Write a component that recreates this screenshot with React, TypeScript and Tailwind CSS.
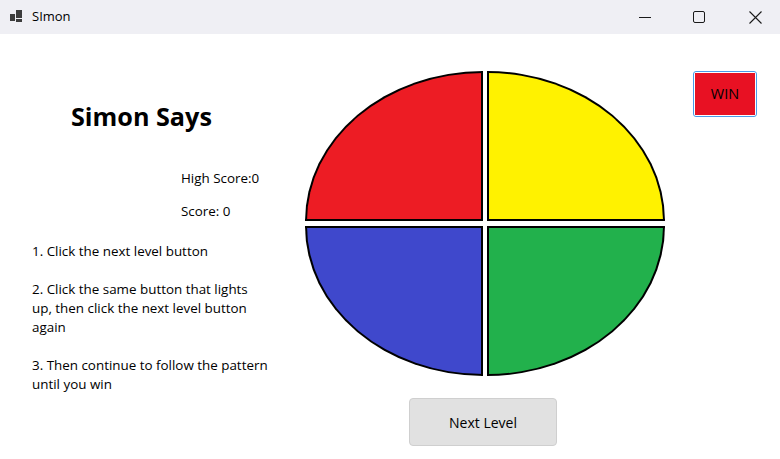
import React from "react";

const font = { fontFamily: '"Open Sans", "Noto Sans", sans-serif' };

function TitleBar() {
  return (
    <div className="flex h-[34px] items-center bg-[#efeff4] text-black">
      {/* default form icon */}
      <svg width="16" height="16" viewBox="0 0 16 16" className="ml-[9px]">
        <rect x="7" y="1" width="6" height="8" fill="#3c3c3c" />
        <rect x="1" y="5" width="5" height="7" fill="#3c3c3c" />
        <rect x="7" y="10" width="6" height="3" fill="#3c3c3c" />
      </svg>
      <span className="ml-[7px] text-[13px]">SImon</span>
      <div className="ml-auto mr-[2px] flex h-full items-center">
        <button className="flex h-full w-[46px] items-center justify-center">
          <svg width="12" height="12" viewBox="0 0 12 12">
            <path d="M0 6.5h12" stroke="#1a1a1a" strokeWidth="1" />
          </svg>
        </button>
        <button className="ml-[8px] flex h-full w-[46px] items-center justify-center">
          <svg width="12" height="12" viewBox="0 0 12 12">
            <rect x="0.5" y="0.5" width="11" height="11" rx="1.5" fill="none" stroke="#1a1a1a" strokeWidth="1" />
          </svg>
        </button>
        <button className="ml-[10px] flex h-full w-[46px] items-center justify-center">
          <svg width="13" height="13" viewBox="0 0 13 13">
            <path d="M0.5 0.5l12 12M12.5 0.5l-12 12" stroke="#1a1a1a" strokeWidth="1.1" />
          </svg>
        </button>
      </div>
    </div>
  );
}

function Board() {
  return (
    <div className="grid grid-cols-[178px_178px] gap-x-[4px] gap-y-[5px]">
      <div className="h-[150px] rounded-tl-[100%] border-2 border-black bg-[#ed1c24]" />
      <div className="h-[150px] rounded-tr-[100%] border-2 border-black bg-[#fff200]" />
      <div className="h-[150px] rounded-bl-[100%] border-2 border-black bg-[#3f48cc]" />
      <div className="h-[150px] rounded-br-[100%] border-2 border-black bg-[#22b14c]" />
    </div>
  );
}

export default function App() {
  return (
    <div className="h-[459px] w-[780px] overflow-hidden bg-white text-black" style={font}>
      <TitleBar />
      <div className="flex">
        {/* left side: title, scores, how to play */}
        <div className="w-[305px] pl-[32px] text-[13.4px] leading-[19px]">
          <h1 className="ml-[39px] mt-[66px] text-[25.2px] font-bold leading-[32px]">Simon Says</h1>
          <p className="ml-[149px] mt-[37px]">High Score:0</p>
          <p className="ml-[149px] mt-[14px]">Score: 0</p>
          <div className="mt-[21px]">
            <p>1. Click the next level button</p>
            <p className="mt-[19px]">
              2. Click the same button that lights
              <br />
              up, then click the next level button
              <br />
              again
            </p>
            <p className="mt-[19px]">
              3. Then continue to follow the pattern
              <br />
              until you win
            </p>
          </div>
        </div>

        {/* game board */}
        <div className="mt-[37px] flex w-[360px] flex-col">
          <Board />
          <button className="ml-[104px] mt-[22px] h-[48px] w-[148px] rounded-[4px] border border-[#cfcfcf] bg-[#e1e1e1] text-[14px]">
            Next Level
          </button>
        </div>

        <div className="ml-[28px] mt-[37px]">
          <div className="h-[46px] w-[64px] rounded-[3px] border border-[#4a9be8] bg-white p-px">
            <div className="flex h-full w-full items-center justify-center bg-[#e81123] text-[14.5px]">WIN</div>
          </div>
        </div>
      </div>
    </div>
  );
}
